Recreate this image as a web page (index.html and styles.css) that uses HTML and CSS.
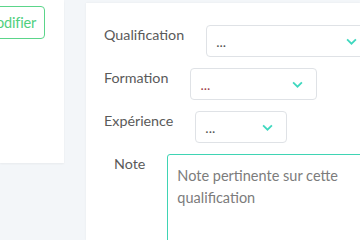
FILE: index.html
```html
<!DOCTYPE html>
<html lang="fr">

<head>
    <meta charset="UTF-8">
    <meta name="viewport" content="width=device-width, initial-scale=1.0">
    <title>Qualification</title>
    <link rel="stylesheet" href="styles.css">
</head>

<body>
    <div class="page">
        <aside class="side-card">
            <button class="btn-outline">Modifier</button>
        </aside>

        <section class="form-card">
            <div class="form-row">
                <label class="form-label">Qualification</label>
                <div class="select select-lg">
                    <span class="select-value">...</span>
                    <svg class="chevron" viewBox="0 0 10 6"><path d="M1 1l4 4 4-4" /></svg>
                </div>
            </div>

            <div class="form-row">
                <label class="form-label">Formation</label>
                <div class="select select-md">
                    <span class="select-value red">...</span>
                    <svg class="chevron" viewBox="0 0 10 6"><path d="M1 1l4 4 4-4" /></svg>
                </div>
            </div>

            <div class="form-row">
                <label class="form-label">Expérience</label>
                <div class="select select-sm">
                    <span class="select-value">...</span>
                    <svg class="chevron" viewBox="0 0 10 6"><path d="M1 1l4 4 4-4" /></svg>
                </div>
            </div>

            <div class="form-row">
                <label class="form-label note-label">Note</label>
                <textarea class="note-input" placeholder="Note pertinente sur cette qualification"></textarea>
            </div>
        </section>
    </div>
</body>

</html>
```

FILE: styles.css
```css
    * {
        box-sizing: border-box;
    }

    body {
        margin: 0;
        background: #f3f6f9;
        font-family: Lato, "Open Sans", sans-serif;
        color: #5a5a5a;
        overflow: hidden;
    }

    .page {
        display: flex;
        gap: 22px;
        height: 240px;
    }

    /* left card, cut by the window edge */
    .side-card {
        width: 64px;
        height: 163px;
        background: #fff;
        box-shadow: 0 1px 2px rgba(0, 0, 0, 0.05);
        display: flex;
        justify-content: flex-end;
        align-items: flex-start;
        padding: 6px 19px 0 0;
        overflow: hidden;
        flex-shrink: 0;
    }

    .btn-outline {
        flex-shrink: 0;
        height: 33px;
        padding: 0 8px;
        border: 1px solid #5bd58a;
        border-radius: 4px;
        background: #fff;
        color: #4fcf7e;
        font-family: inherit;
        font-size: 14.5px;
        letter-spacing: -0.2px;
    }

    .form-card {
        flex: 1;
        margin-top: 3px;
        background: #fff;
        box-shadow: 0 0 2px rgba(0, 0, 0, 0.06);
        padding: 22px 0 0 18px;
        overflow: hidden;
    }

    .form-row {
        display: flex;
        align-items: flex-start;
        gap: 22px;
        margin-bottom: 11px;
    }

    .form-label {
        font-size: 14.3px;
        line-height: 20px;
        white-space: nowrap;
    }

    .note-label {
        margin-left: 10px;
    }

    .select {
        position: relative;
        flex-shrink: 0;
        height: 32px;
        border: 1px solid #dfe2e6;
        border-radius: 4px;
        padding: 0 9px;
        display: flex;
        align-items: center;
        justify-content: space-between;
    }

    .select-lg {
        width: 165px;
    }

    .select-md {
        width: 127px;
    }

    .select-sm {
        width: 92px;
    }

    .select-value {
        font-size: 14px;
        color: #555;
    }

    .select-value.red {
        color: #a0414a;
    }

    .chevron {
        width: 11px;
        height: 7px;
        margin-right: 4px;
        fill: none;
        stroke: #3fd8bf;
        stroke-width: 1.6;
    }

    .note-input {
        flex-shrink: 0;
        width: 220px;
        height: 110px;
        border: 1px solid #3fd4b4;
        border-radius: 3px;
        padding: 10px 9px;
        font-family: inherit;
        font-size: 14.5px;
        line-height: 22px;
        resize: none;
        outline: none;
        color: #555;
    }

    .note-input::placeholder {
        color: #7c7c7c;
    }
```
